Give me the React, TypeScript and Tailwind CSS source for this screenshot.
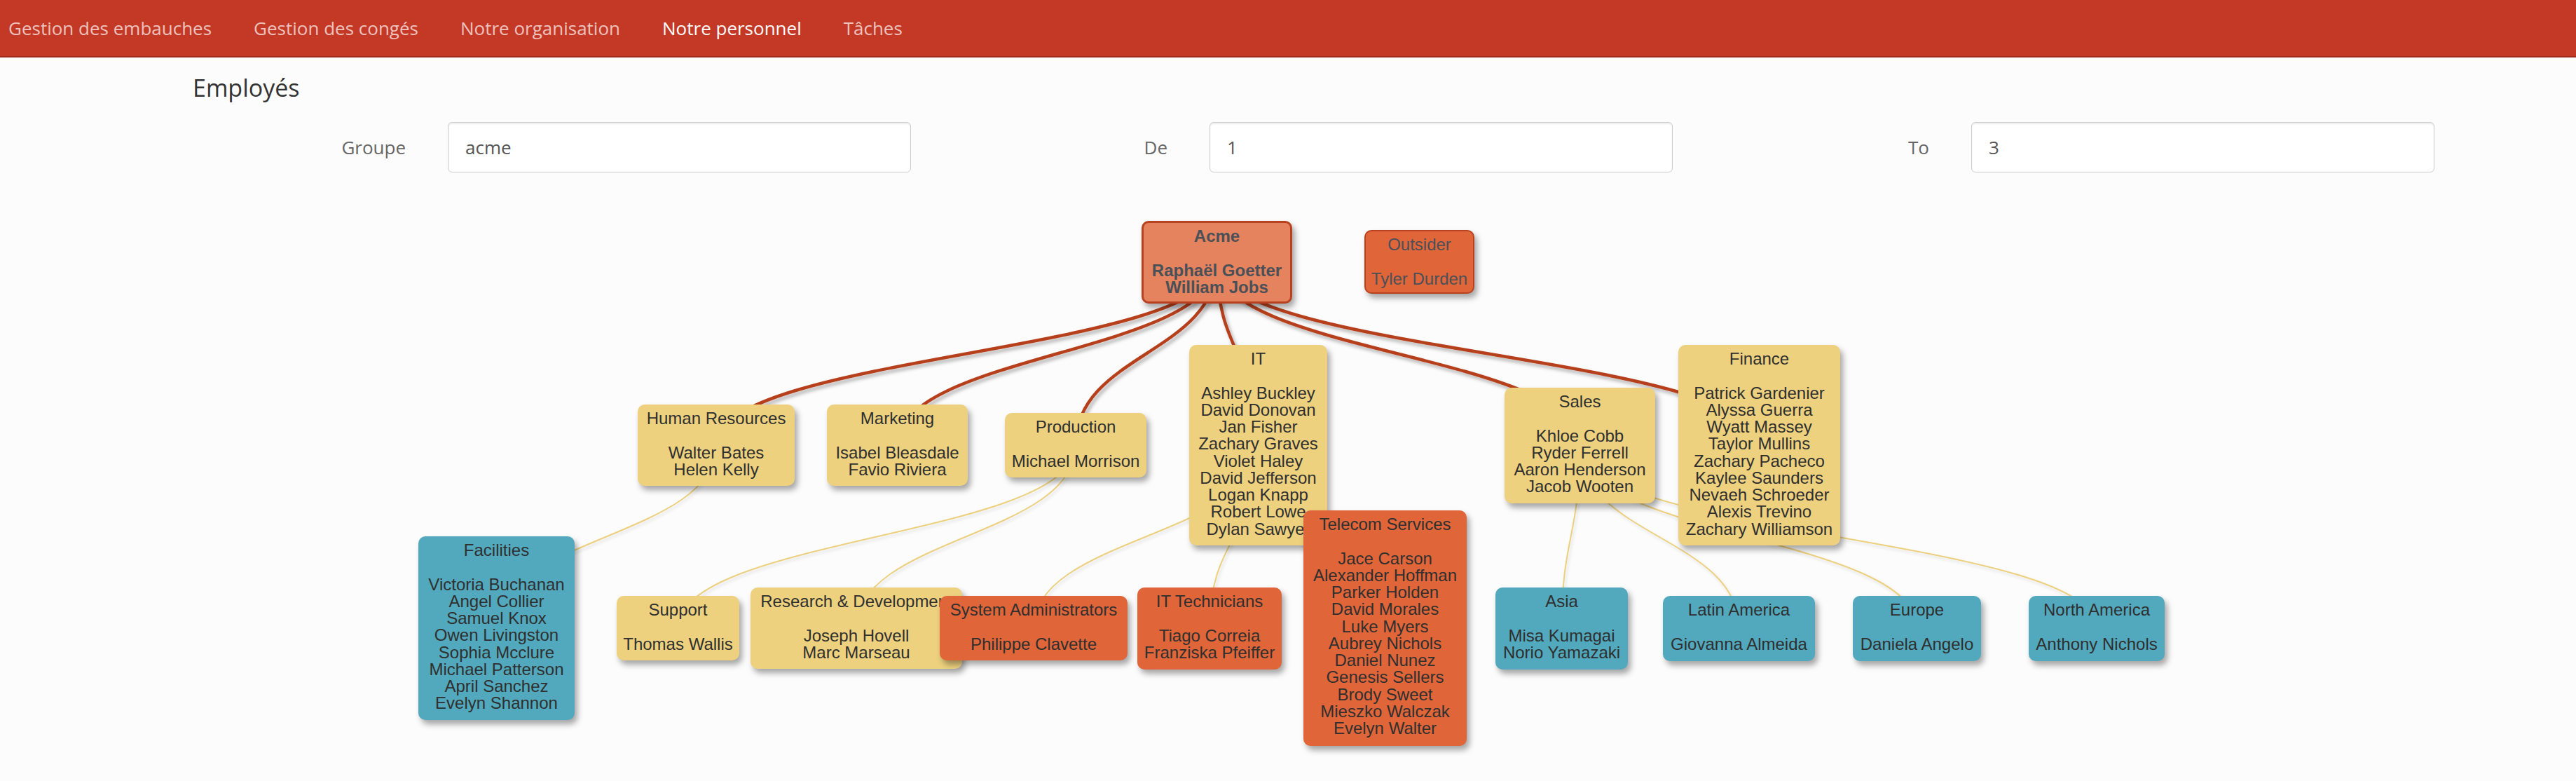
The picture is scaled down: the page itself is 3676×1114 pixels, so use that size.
import React from "react";

type Node = {
  id: string;
  x: number;
  y: number;
  w: number;
  h: number;
  kind: "root" | "outsider" | "yellow" | "orange" | "teal";
  title: string;
  names: string[];
};

const TOP = 280;

const nodes: Node[] = [
  { id: "acme", x: 1629, y: 315, w: 215, h: 118, kind: "root", title: "Acme", names: ["Raphaël Goetter", "William Jobs"] },
  { id: "outsider", x: 1947, y: 328, w: 157, h: 91, kind: "outsider", title: "Outsider", names: ["Tyler Durden"] },
  { id: "hr", x: 910, y: 577, w: 224, h: 116, kind: "yellow", title: "Human Resources", names: ["Walter Bates", "Helen Kelly"] },
  { id: "marketing", x: 1180, y: 577, w: 201, h: 116, kind: "yellow", title: "Marketing", names: ["Isabel Bleasdale", "Favio Riviera"] },
  { id: "production", x: 1434, y: 589, w: 202, h: 92, kind: "yellow", title: "Production", names: ["Michael Morrison"] },
  {
    id: "it", x: 1697, y: 492, w: 197, h: 286, kind: "yellow", title: "IT",
    names: ["Ashley Buckley", "David Donovan", "Jan Fisher", "Zachary Graves", "Violet Haley", "David Jefferson", "Logan Knapp", "Robert Lowe", "Dylan Sawyer"],
  },
  { id: "sales", x: 2147, y: 553, w: 215, h: 165, kind: "yellow", title: "Sales", names: ["Khloe Cobb", "Ryder Ferrell", "Aaron Henderson", "Jacob Wooten"] },
  {
    id: "finance", x: 2395, y: 492, w: 231, h: 286, kind: "yellow", title: "Finance",
    names: ["Patrick Gardenier", "Alyssa Guerra", "Wyatt Massey", "Taylor Mullins", "Zachary Pacheco", "Kaylee Saunders", "Nevaeh Schroeder", "Alexis Trevino", "Zachary Williamson"],
  },
  {
    id: "facilities", x: 597, y: 765, w: 223, h: 262, kind: "teal", title: "Facilities",
    names: ["Victoria Buchanan", "Angel Collier", "Samuel Knox", "Owen Livingston", "Sophia Mcclure", "Michael Patterson", "April Sanchez", "Evelyn Shannon"],
  },
  { id: "support", x: 880, y: 850, w: 175, h: 92, kind: "yellow", title: "Support", names: ["Thomas Wallis"] },
  { id: "rd", x: 1071, y: 838, w: 302, h: 116, kind: "yellow", title: "Research & Development", names: ["Joseph Hovell", "Marc Marseau"] },
  { id: "sysadmin", x: 1341, y: 850, w: 268, h: 92, kind: "orange", title: "System Administrators", names: ["Philippe Clavette"] },
  { id: "ittech", x: 1623, y: 838, w: 206, h: 117, kind: "orange", title: "IT Technicians", names: ["Tiago Correia", "Franziska Pfeiffer"] },
  {
    id: "telecom", x: 1860, y: 728, w: 233, h: 336, kind: "orange", title: "Telecom Services",
    names: ["Jace Carson", "Alexander Hoffman", "Parker Holden", "David Morales", "Luke Myers", "Aubrey Nichols", "Daniel Nunez", "Genesis Sellers", "Brody Sweet", "Mieszko Walczak", "Evelyn Walter"],
  },
  { id: "asia", x: 2134, y: 838, w: 189, h: 117, kind: "teal", title: "Asia", names: ["Misa Kumagai", "Norio Yamazaki"] },
  { id: "latam", x: 2373, y: 850, w: 217, h: 93, kind: "teal", title: "Latin America", names: ["Giovanna Almeida"] },
  { id: "europe", x: 2644, y: 850, w: 183, h: 93, kind: "teal", title: "Europe", names: ["Daniela Angelo"] },
  { id: "na", x: 2895, y: 850, w: 194, h: 93, kind: "teal", title: "North America", names: ["Anthony Nichols"] },
];

const thickEdges: [string, string][] = [
  ["acme", "hr"],
  ["acme", "marketing"],
  ["acme", "production"],
  ["acme", "it"],
  ["acme", "sales"],
  ["acme", "finance"],
];

const thinEdges: [string, string][] = [
  ["hr", "facilities"],
  ["production", "support"],
  ["production", "rd"],
  ["it", "sysadmin"],
  ["it", "ittech"],
  ["it", "telecom"],
  ["sales", "asia"],
  ["sales", "latam"],
  ["sales", "europe"],
  ["sales", "na"],
];

const byId: Record<string, Node> = Object.fromEntries(nodes.map((n) => [n.id, n]));

function edgePath(a: string, b: string) {
  const p = byId[a];
  const c = byId[b];
  const x1 = p.x + p.w / 2;
  const y1 = p.y + p.h / 2 - TOP;
  const x2 = c.x + c.w / 2;
  const y2 = c.y + c.h / 2 - TOP;
  const ym = (y1 + y2) / 2;
  return `M ${x1} ${y1} C ${x1} ${ym}, ${x2} ${ym}, ${x2} ${y2}`;
}

function kindClass(kind: Node["kind"]) {
  switch (kind) {
    case "root":
      return "bg-[#e5835e] border-[3px] border-[#b8411f] text-[#4a5058] font-bold pt-[7px]";
    case "outsider":
      return "bg-[#e0663a] border-2 border-[#b8411f] text-[#4a5058] pt-[7px]";
    case "yellow":
      return "bg-[#edd17f] text-[#2f2f2f] pt-[8px]";
    case "orange":
      return "bg-[#e0663a] text-[#2f2f2f] pt-[8px]";
    case "teal":
      return "bg-[#52a9bd] text-[#2f2f2f] pt-[8px]";
  }
}

function OrgNode({ n }: { n: Node }) {
  return (
    <div
      className={`absolute rounded-[10px] shadow-[4px_6px_8px_rgba(0,0,0,0.35)] text-center whitespace-nowrap text-[24px] leading-[24.25px] font-['Liberation_Sans',Arial,sans-serif] ${kindClass(n.kind)}`}
      style={{ left: n.x, top: n.y - TOP, width: n.w, height: n.h }}
    >
      <div className="flex flex-col items-center">
        <div>{n.title}</div>
        <div className="h-[24.25px]" />
        {n.names.map((name) => (
          <div key={name}>{name}</div>
        ))}
      </div>
    </div>
  );
}

function Field({ label, value }: { label: string; value: string }) {
  return (
    <div className="flex items-center w-[1087px] shrink-0">
      <div className="w-[336px] text-right text-[26px] text-[#666666]">{label}</div>
      <div className="ml-[60px] w-[661px] h-[72px] bg-white border border-[#cccccc] rounded-[6px] shadow-[inset_0_2px_2px_rgba(0,0,0,0.08)] flex items-center pl-[24px] text-[26px] text-[#555555]">
        {value}
      </div>
    </div>
  );
}

export default function App() {
  const navItems = ["Gestion des embauches", "Gestion des congés", "Notre organisation", "Notre personnel", "Tâches"];
  return (
    <div className="w-[3676px] h-[1114px] overflow-hidden bg-[#fcfcfc] font-['Open_Sans',sans-serif]">
      <nav className="h-[82px] bg-[#c43826] border-b-2 border-[#9e2a1b] flex items-center pl-[12px] gap-[60px] text-[26px]">
        {navItems.map((t) => (
          <span key={t} className={t === "Notre personnel" ? "text-white" : "text-[#edc3be]"}>
            {t}
          </span>
        ))}
      </nav>
      <div className="pl-[275px] mt-[26px] h-[35px] leading-[35px] text-[34px] text-[#333333]">Employés</div>
      <div className="mt-[31px] pl-[243px] flex">
        <Field label="Groupe" value="acme" />
        <Field label="De" value="1" />
        <Field label="To" value="3" />
      </div>
      <div className="relative mt-[34px] w-[3676px] h-[834px]">
        <svg className="absolute inset-0" width="3676" height="834" viewBox="0 0 3676 834">
          <defs>
            <filter id="thickShadow" x="-20%" y="-20%" width="140%" height="140%">
              <feDropShadow dx="3" dy="4" stdDeviation="2.5" floodColor="#000000" floodOpacity="0.3" />
            </filter>
            <filter id="thinShadow" x="-20%" y="-20%" width="140%" height="140%">
              <feDropShadow dx="2" dy="3" stdDeviation="2" floodColor="#000000" floodOpacity="0.12" />
            </filter>
          </defs>
          <g filter="url(#thinShadow)">
            {thinEdges.map(([a, b]) => (
              <path key={a + b} d={edgePath(a, b)} fill="none" stroke="#ecd07f" strokeWidth={2} />
            ))}
          </g>
          <g filter="url(#thickShadow)">
            {thickEdges.map(([a, b]) => (
              <path key={a + b} d={edgePath(a, b)} fill="none" stroke="#b73f1d" strokeWidth={4.5} />
            ))}
          </g>
        </svg>
        {nodes
          .filter((n) => n.id !== "acme" && n.id !== "outsider")
          .map((n) => (
            <OrgNode key={n.id} n={n} />
          ))}
        <OrgNode n={byId["acme"]} />
        <OrgNode n={byId["outsider"]} />
      </div>
    </div>
  );
}
